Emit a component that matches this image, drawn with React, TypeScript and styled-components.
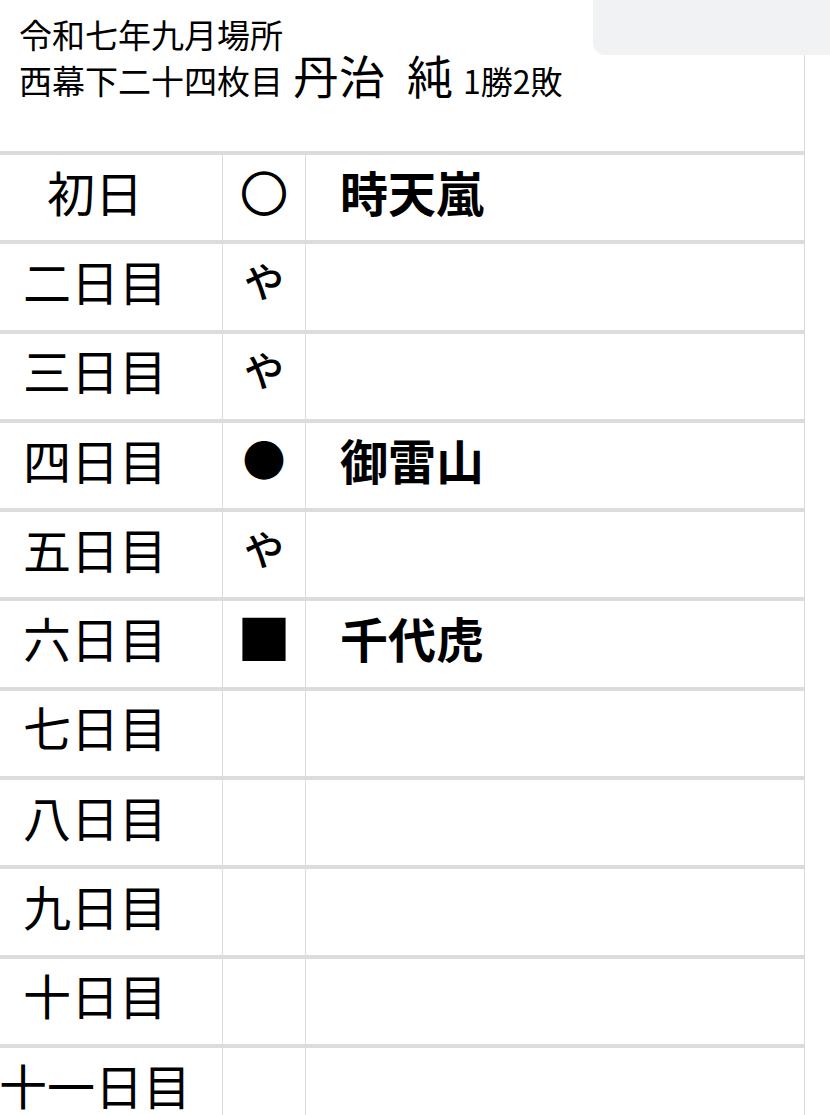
import styled, { createGlobalStyle } from 'styled-components';

type Bout = { day: string; mark?: string; opponent?: string };

const bouts: Bout[] = [
  { day: '初日', mark: '○', opponent: '時天嵐' },
  { day: '二日目', mark: 'や' },
  { day: '三日目', mark: 'や' },
  { day: '四日目', mark: '●', opponent: '御雷山' },
  { day: '五日目', mark: 'や' },
  { day: '六日目', mark: '■', opponent: '千代虎' },
  { day: '七日目' },
  { day: '八日目' },
  { day: '九日目' },
  { day: '十日目' },
  { day: '十一日目' },
];

// 記号ごとの大きさ（○ 勝ち, ● 負け, ■ 不戦敗, や 休み）
const markSize: Record<string, number> = { '○': 47, '●': 43, '■': 54, 'や': 40 };

const GlobalStyle = createGlobalStyle`
  html, body {
    margin: 0;
    padding: 0;
    background: #fff;
    overflow: hidden;
  }
  body {
    font-family: 'Noto Sans CJK JP', 'Noto Sans', sans-serif;
    color: #000;
  }
`;

const Page = styled.div`
  position: relative;
  width: 805px;
  height: 1115px;
  border-right: 1px solid #d8d8d8;
  box-sizing: border-box;
  overflow: hidden;
`;

// 右上のグレーの帯（他の要素に重なっている）
const TopTab = styled.div`
  position: fixed;
  top: 0;
  right: 0;
  width: 237px;
  height: 55px;
  background: #f1f2f4;
  border-bottom-left-radius: 12px;
`;

const Header = styled.header`
  padding: 14px 0 0 19px;
  height: 151px;
  box-sizing: border-box;
`;

const Basho = styled.div`
  font-size: 33px;
  line-height: 40px;
`;

const RankLine = styled.div`
  display: flex;
  align-items: baseline;
  font-size: 33px;
  line-height: 40px;
  white-space: nowrap;
`;

const Name = styled.span`
  display: inline-flex;
  gap: 22px;
  margin-left: 10px;
  font-size: 46px;
`;

const Record = styled.span`
  margin-left: 10px;
  font-size: 32px;
`;

const Table = styled.div`
  margin-left: -32px;
`;

const Row = styled.div`
  display: grid;
  grid-template-columns: 254px 83px 1fr;
  height: 89.3px;
  box-sizing: border-box;
  border-top: 4px solid #dcdcdc;
`;

const Cell = styled.div`
  display: flex;
  align-items: center;
  line-height: 1;
  padding-bottom: 14px;
  box-sizing: border-box;
`;

const DayCell = styled(Cell)`
  justify-content: center;
  font-size: 48px;
  white-space: nowrap;
`;

const MarkCell = styled(Cell)<{ $size: number; $kana?: boolean; $outline?: boolean }>`
  justify-content: center;
  border-left: 1px solid #dcdcdc;
  font-size: ${p => p.$size}px;
  font-weight: ${p => (p.$kana ? 500 : 700)};
  -webkit-text-stroke: ${p => (p.$outline ? '1.6px #000' : '0')};
`;

const OpponentCell = styled(Cell)`
  padding-left: 34px;
  border-left: 1px solid #dcdcdc;
  font-size: 48px;
  font-weight: 700;
`;

const App = () => (
  <>
    <GlobalStyle />
    <Page>
      <Header>
        <Basho>令和七年九月場所</Basho>
        <RankLine>
          西幕下二十四枚目
          <Name>
            <span>丹治</span>
            <span>純</span>
          </Name>
          <Record>1勝2敗</Record>
        </RankLine>
      </Header>
      <Table>
        {bouts.map(b => (
          <Row key={b.day}>
            <DayCell>{b.day}</DayCell>
            <MarkCell
              $size={b.mark ? markSize[b.mark] : 47}
              $kana={b.mark === 'や'}
              $outline={b.mark === '○'}
            >
              {b.mark}
            </MarkCell>
            <OpponentCell>{b.opponent}</OpponentCell>
          </Row>
        ))}
      </Table>
    </Page>
    <TopTab />
  </>
);

export default App;
